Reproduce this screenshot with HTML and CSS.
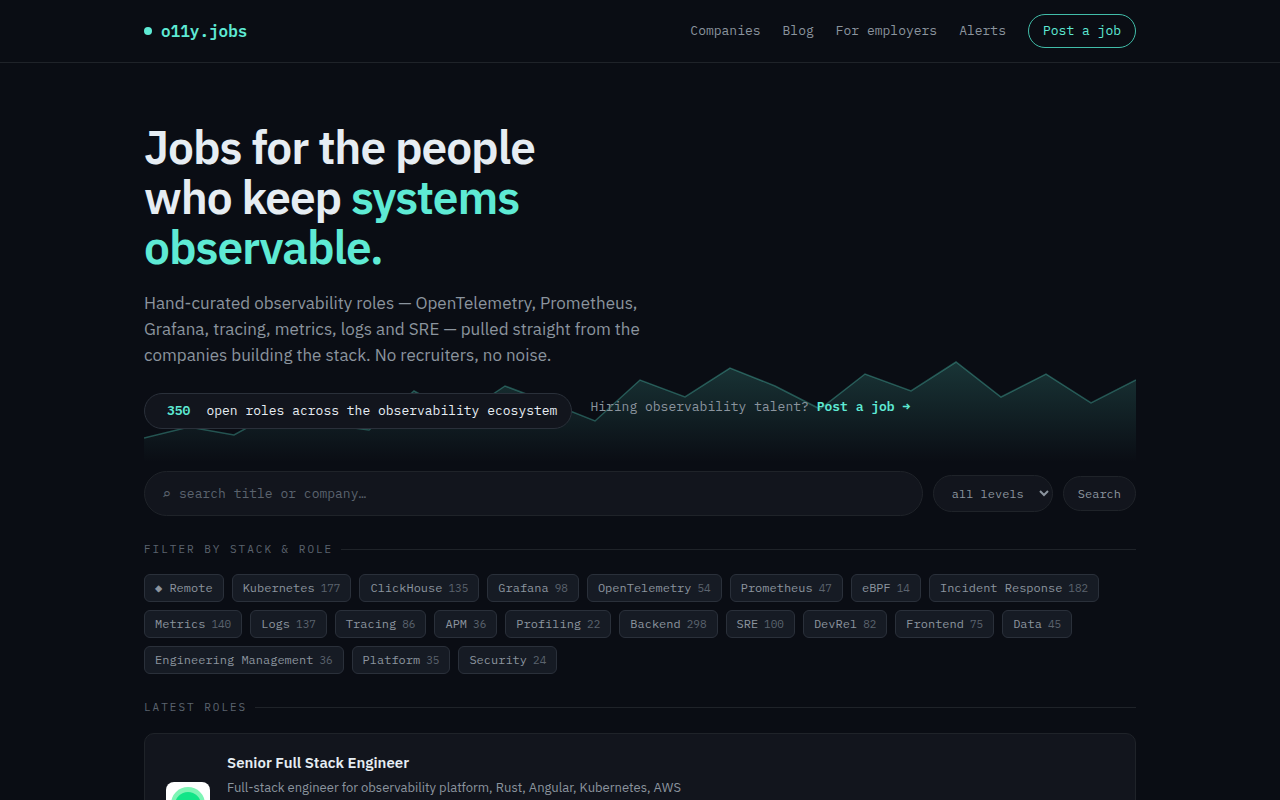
FILE: index.html
```html
<!DOCTYPE html>
<html lang="en">
<head>
    <meta charset="UTF-8">
    <meta name="viewport" content="width=device-width, initial-scale=1">
    <title>o11y.jobs</title>
    <link rel="stylesheet" href="styles.css">
</head>
<body>

<header class="site-header">
    <div class="wrap bar">
        <a class="logo" href="#"><span class="dot"></span>o11y.jobs</a>
        <nav class="nav">
            <a href="#">Companies</a>
            <a href="#">Blog</a>
            <a href="#">For employers</a>
            <a href="#">Alerts</a>
            <a class="post" href="#">Post a job</a>
        </nav>
    </div>
</header>

<main class="wrap">
    <section class="hero">
        <svg class="wave" viewBox="0 0 992 120" preserveAspectRatio="none" aria-hidden="true">
            <defs>
                <linearGradient id="fade" x1="0" y1="0" x2="0" y2="1">
                    <stop offset="0" stop-color="#5eead4" stop-opacity="0.18"/>
                    <stop offset="1" stop-color="#5eead4" stop-opacity="0"/>
                </linearGradient>
            </defs>
            <path fill="url(#fade)" d="M0,96 L45,85 L90,93 L135,68 L180,82 L225,88 L270,49 L316,74 L361,44 L406,61 L451,79 L496,38 L541,55 L586,26 L631,44 L676,67 L721,32 L767,49 L812,20 L857,55 L902,32 L947,61 L992,38 L992,120 L0,120 Z"/>
            <polyline class="wave-line" points="0,96 45,85 90,93 135,68 180,82 225,88 270,49 316,74 361,44 406,61 451,79 496,38 541,55 586,26 631,44 676,67 721,32 767,49 812,20 857,55 902,32 947,61 992,38"/>
        </svg>
        <h1>Jobs for the people who keep <em>systems observable.</em></h1>
        <p class="lead">Hand-curated observability roles — OpenTelemetry, Prometheus, Grafana, tracing, metrics, logs and SRE — pulled straight from the companies building the stack. No recruiters, no noise.</p>
        <div class="hero-meta">
            <div class="count"><b>350</b><span>open roles across the observability ecosystem</span></div>
            <p class="hiring">Hiring observability talent? <a href="#">Post a job →</a></p>
        </div>
    </section>

    <form class="search">
        <label class="search-box">
            <span class="glass">⌕</span>
            <input type="text" placeholder="search title or company…" aria-label="Search title or company">
        </label>
        <select aria-label="Level">
            <option>all levels</option>
        </select>
        <button type="submit">Search</button>
    </form>

    <h2 class="label">Filter by stack &amp; role</h2>
    <div class="chips">
        <a href="#">◆ Remote</a>
        <a href="#">Kubernetes<small>177</small></a>
        <a href="#">ClickHouse<small>135</small></a>
        <a href="#">Grafana<small>98</small></a>
        <a href="#">OpenTelemetry<small>54</small></a>
        <a href="#">Prometheus<small>47</small></a>
        <a href="#">eBPF<small>14</small></a>
        <a href="#">Incident Response<small>182</small></a>
        <a href="#">Metrics<small>140</small></a>
        <a href="#">Logs<small>137</small></a>
        <a href="#">Tracing<small>86</small></a>
        <a href="#">APM<small>36</small></a>
        <a href="#">Profiling<small>22</small></a>
        <a href="#">Backend<small>298</small></a>
        <a href="#">SRE<small>100</small></a>
        <a href="#">DevRel<small>82</small></a>
        <a href="#">Frontend<small>75</small></a>
        <a href="#">Data<small>45</small></a>
        <a href="#">Engineering Management<small>36</small></a>
        <a href="#">Platform<small>35</small></a>
        <a href="#">Security<small>24</small></a>
    </div>

    <h2 class="label">Latest roles</h2>
    <article class="job">
        <svg class="job-logo" viewBox="0 0 44 44" aria-hidden="true">
            <rect width="44" height="44" rx="8" fill="#fff"/>
            <circle cx="22" cy="22" r="17" fill="#7df5b5"/>
            <circle cx="22" cy="23" r="13" fill="#12e588"/>
        </svg>
        <div class="job-body">
            <h3><a href="#">Senior Full Stack Engineer</a></h3>
            <p>Full-stack engineer for observability platform, Rust, Angular, Kubernetes, AWS</p>
        </div>
    </article>
</main>

</body>
</html>
```
FILE: styles.css
```css
:root {
    --bg: #0a0d14;
    --panel: #12151d;
    --chip: #161b24;
    --line: #1f2329;
    --line-2: #2a303a;
    --text: #e6edf3;
    --dim: #8b949e;
    --faint: #5b636e;
    --accent: #5eead4;
    --sans: "IBM Plex Sans", Roboto, sans-serif;
    --mono: "IBM Plex Mono", "Liberation Mono", monospace;
}

* {
    box-sizing: border-box;
    margin: 0;
    padding: 0;
}

body {
    background: var(--bg);
    color: var(--text);
    font-family: var(--sans);
}

a {
    color: inherit;
    text-decoration: none;
}

.wrap {
    max-width: 1040px;
    margin: 0 auto;
    padding: 0 24px;
}

/* header */
.site-header {
    border-bottom: 1px solid var(--line);
}

.bar {
    display: flex;
    align-items: center;
    justify-content: space-between;
    padding-top: 14px;
    padding-bottom: 14px;
}

.logo {
    display: flex;
    align-items: center;
    gap: 9px;
    font: 600 16px/24px var(--mono);
    color: var(--accent);
}

.dot {
    width: 8px;
    height: 8px;
    border-radius: 50%;
    background: var(--accent);
}

.nav {
    display: flex;
    align-items: center;
    gap: 22px;
    font: 13px/20px var(--mono);
    color: var(--dim);
}

.nav .post {
    padding: 6px 14px;
    border: 1px solid #41bda9;
    border-radius: 20px;
    color: var(--accent);
}

/* hero */
.hero {
    position: relative;
    padding: 59px 0 33px;
}

.hero h1,
.lead,
.hero-meta {
    position: relative;
}

.wave {
    position: absolute;
    left: 0;
    bottom: 0;
    width: 100%;
    height: 120px;
}

.wave-line {
    fill: none;
    stroke: #5eead4;
    stroke-opacity: 0.3;
    stroke-width: 1.5;
}

.hero h1 {
    max-width: 460px;
    font-size: 46px;
    font-weight: 600;
    line-height: 50px;
    letter-spacing: -1px;
}

.hero h1 em {
    font-style: normal;
    color: var(--accent);
}

.lead {
    max-width: 520px;
    margin-top: 18px;
    font-size: 17px;
    line-height: 26px;
    color: var(--dim);
}

.hero-meta {
    display: flex;
    flex-wrap: wrap;
    align-items: flex-start;
    gap: 18px;
    margin-top: 25px;
    font: 13px/20px var(--mono);
}

.count {
    display: flex;
    gap: 16px;
    padding: 7px 14px 7px 22px;
    border: 1px solid var(--line-2);
    border-radius: 20px;
    background: var(--panel);
}

.count b,
.hiring a {
    font-weight: 600;
    color: var(--accent);
}

.hiring {
    line-height: 28px;
    color: var(--dim);
}

/* search */
.search {
    display: flex;
    align-items: center;
    gap: 10px;
    margin-top: 9px;
}

.search-box {
    flex: 1;
    display: flex;
    align-items: center;
    gap: 8px;
    height: 45px;
    padding: 0 17px;
    border: 1px solid var(--line);
    border-radius: 24px;
    background: var(--panel);
    font: 13px/20px var(--mono);
    color: var(--dim);
}

.search-box input {
    flex: 1;
    min-width: 0;
    border: 0;
    outline: 0;
    background: none;
    font: inherit;
    color: var(--text);
}

.search-box input::placeholder {
    color: var(--faint);
}

.glass {
    font-size: 15px;
    color: var(--faint);
}

.search select,
.search button {
    border: 1px solid var(--line);
    border-radius: 20px;
    background: var(--panel);
    font: 12px/17px var(--mono);
    color: var(--dim);
}

.search select {
    width: 120px;
    padding: 9px 0 9px 14px;
}

.search button {
    padding: 8px 14px;
}

/* filters */
.label {
    display: flex;
    align-items: center;
    gap: 8px;
    margin-top: 24px;
    font: 11px/18px var(--mono);
    letter-spacing: 2px;
    text-transform: uppercase;
    color: var(--faint);
}

.label::after {
    content: "";
    flex: 1;
    height: 1px;
    background: var(--line);
}

.chips {
    display: flex;
    flex-wrap: wrap;
    gap: 8px;
    margin-top: 16px;
}

.chips a {
    padding: 4px 10px;
    border: 1px solid var(--line-2);
    border-radius: 6px;
    background: var(--chip);
    font: 12px/18px var(--mono);
    color: var(--dim);
}

.chips small {
    margin-left: 6px;
    font-size: 11px;
    color: var(--faint);
}

/* roles */
.job {
    display: flex;
    align-items: center;
    gap: 17px;
    min-height: 142px;
    margin: 17px 0 24px;
    padding: 18px 21px;
    border: 1px solid var(--line);
    border-radius: 10px;
    background: var(--panel);
}

.job-logo {
    flex: none;
    width: 44px;
    height: 44px;
}

.job-body {
    align-self: flex-start;
}

.job h3 {
    font-size: 15px;
    font-weight: 600;
    line-height: 22px;
}

.job p {
    margin-top: 3px;
    font-size: 13px;
    line-height: 21px;
    color: var(--dim);
}
```
